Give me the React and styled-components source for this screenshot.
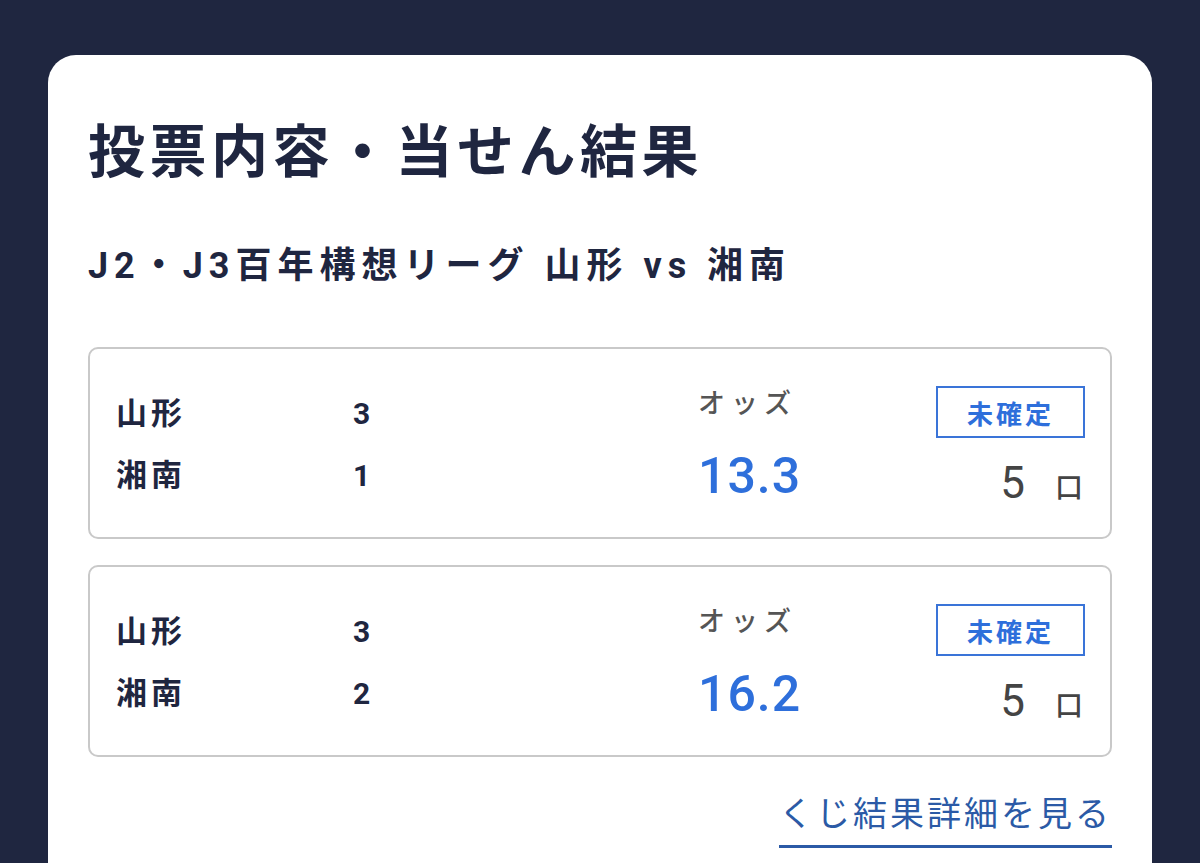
import React from "react";
import styled, { createGlobalStyle } from "styled-components";

const GlobalStyle = createGlobalStyle`
	html, body {
		margin: 0;
		padding: 0;
		background: #1f2640;
	}
	body {
		font-family: Roboto, "Noto Sans CJK JP", sans-serif;
		color: #1f2640;
	}
`;

const bets = [
	{ home: "山形", homeScore: 3, away: "湘南", awayScore: 1, odds: "13.3", units: 5 },
	{ home: "山形", homeScore: 3, away: "湘南", awayScore: 2, odds: "16.2", units: 5 },
];

function App() {
	return (
		<>
			<GlobalStyle />
			<Page>
				<Card>
					<Title>投票内容・当せん結果</Title>
					<MatchName>J2・J3百年構想リーグ 山形 vs 湘南</MatchName>
					<BetList>
						{bets.map((bet, idx) => (
							<BetBox key={idx}>
								<Scores>
									<Team>{bet.home}</Team>
									<Score>{bet.homeScore}</Score>
									<Team>{bet.away}</Team>
									<Score>{bet.awayScore}</Score>
								</Scores>
								<Odds>
									<span className="label">オッズ</span>
									<span className="value">{bet.odds}</span>
								</Odds>
								<Status>
									<Badge>未確定</Badge>
									<Units>
										<span className="num">{bet.units}</span>
										<span className="unit">口</span>
									</Units>
								</Status>
							</BetBox>
						))}
					</BetList>
					<LinkRow>
						<DetailLink href="#">くじ結果詳細を見る</DetailLink>
					</LinkRow>
				</Card>
			</Page>
		</>
	);
}

const Page = styled.div`
	height: 863px;
	overflow: hidden;
	padding: 55px 48px 0;
	box-sizing: border-box;
`;

const Card = styled.div`
	background: #fff;
	border-radius: 28px 28px 0 0;
	padding: 52px 40px 40px;
	min-height: 900px;
`;

const Title = styled.h1`
	margin: 0;
	font-family: "Noto Sans CJK JP", sans-serif;
	font-size: 57px;
	font-weight: 700;
	line-height: 80px;
	letter-spacing: 4.5px;
	color: #1f2640;
`;

const MatchName = styled.h2`
	margin: 54px 0 0;
	font-size: 36px;
	font-weight: 700;
	line-height: 50px;
	letter-spacing: 6px;
	color: #1f2640;
`;

const BetList = styled.div`
	display: flex;
	flex-direction: column;
	gap: 26px;
	margin-top: 56px;
`;

const BetBox = styled.div`
	display: grid;
	grid-template-columns: 582px 1fr auto;
	align-items: center;
	height: 192px;
	box-sizing: border-box;
	padding: 0 25px 0 26px;
	border: 2px solid #c9c9c9;
	border-radius: 10px;
`;

const Scores = styled.div`
	display: grid;
	grid-template-columns: 237px 1fr;
	row-gap: 18px;
	align-items: center;
	padding-top: 4px;
`;

const Team = styled.span`
	font-size: 31px;
	font-weight: 700;
	line-height: 44px;
	letter-spacing: 4px;
	color: #1f2640;
`;

const Score = styled.span`
	font-size: 30px;
	font-weight: 700;
	line-height: 44px;
	color: #1f2640;
`;

const Odds = styled.div`
	display: flex;
	flex-direction: column;
	align-items: flex-start;
	gap: 26px;
	padding-top: 4px;
	.label {
		font-size: 27px;
		font-weight: 500;
		line-height: 36px;
		letter-spacing: 6px;
		color: #555;
	}
	.value {
		font-size: 50px;
		font-weight: 500;
		line-height: 56px;
		letter-spacing: 1px;
		color: #2e6fdb;
	}
`;

const Status = styled.div`
	display: flex;
	flex-direction: column;
	align-items: flex-end;
	gap: 20px;
	padding-top: 8px;
`;

const Badge = styled.span`
	display: flex;
	align-items: center;
	justify-content: center;
	width: 149px;
	height: 52px;
	box-sizing: border-box;
	border: 2px solid #3a74d8;
	font-size: 26px;
	font-weight: 700;
	letter-spacing: 3px;
	color: #2e6fdb;
`;

const Units = styled.div`
	display: flex;
	align-items: baseline;
	gap: 30px;
	padding-right: 2px;
	color: #444;
	.num {
		font-size: 44px;
		line-height: 50px;
	}
	.unit {
		font-size: 28px;
		font-weight: 500;
	}
`;

const LinkRow = styled.div`
	display: flex;
	justify-content: flex-end;
	margin-top: 30px;
`;

const DetailLink = styled.a`
	font-family: "Noto Sans CJK JP", sans-serif;
	font-size: 34px;
	font-weight: 400;
	line-height: 50px;
	letter-spacing: 3px;
	color: #2b5aa6;
	text-decoration: none;
	padding-bottom: 8px;
	border-bottom: 3px solid #2b5aa6;
`;

export default App;
